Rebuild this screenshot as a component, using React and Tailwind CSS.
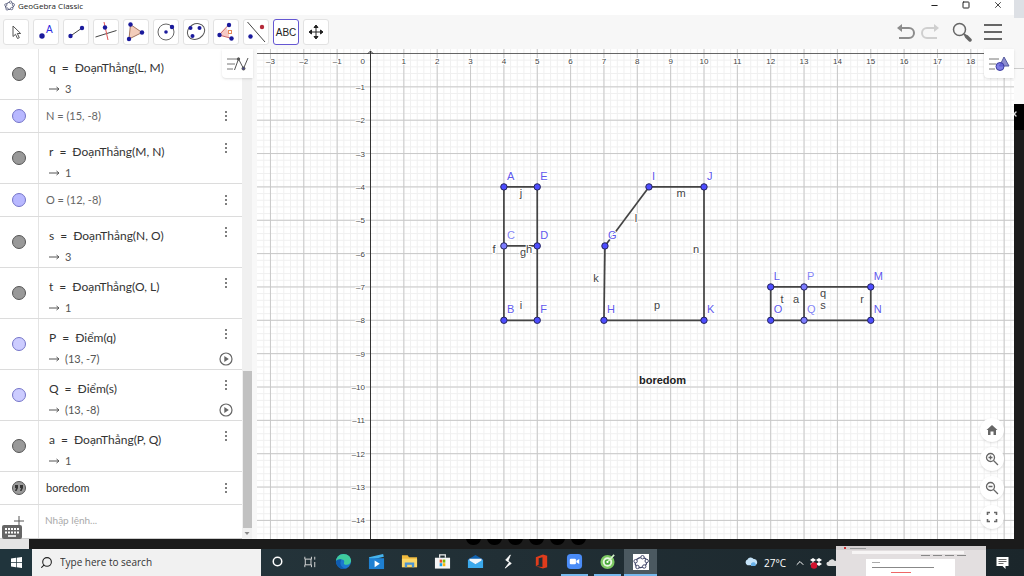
import { useState } from 'react';
import { Minus, Square, X, Search, ChevronUp } from 'lucide-react';

// ---------- ALGEBRA DATA ----------
const ROWS = [
  { name: 'q', def: 'ĐoạnThẳng(L, M)', out: '3', color: 'bg-[#999] border-[#555]' },
  { plain: 'N = (15, -8)', color: 'bg-[#b8b8ff] border-[#7474c8]' },
  { name: 'r', def: 'ĐoạnThẳng(M, N)', out: '1', color: 'bg-[#999] border-[#555]' },
  { plain: 'O = (12, -8)', color: 'bg-[#b8b8ff] border-[#7474c8]' },
  { name: 's', def: 'ĐoạnThẳng(N, O)', out: '3', color: 'bg-[#999] border-[#555]' },
  { name: 't', def: 'ĐoạnThẳng(O, L)', out: '1', color: 'bg-[#999] border-[#555]' },
  { name: 'P', def: 'Điểm(q)', out: '(13, -7)', play: true, color: 'bg-[#ccccff] border-[#7474c8]' },
  { name: 'Q', def: 'Điểm(s)', out: '(13, -8)', play: true, color: 'bg-[#ccccff] border-[#7474c8]' },
  { name: 'a', def: 'ĐoạnThẳng(P, Q)', out: '1', color: 'bg-[#999] border-[#555]' },
  { plain: 'boredom', text: true, color: 'bg-[#999] border-[#555]' },
];

// ---------- GRAPH DATA ----------
const UNIT = 33.35;
const OX = 113.5;
const OY = 4.5;
const px = (x) => OX + x * UNIT;
const py = (y) => OY - y * UNIT;

const POINTS = {
  A: [4, -4], E: [5, -4], C: [4, -5.77], D: [5, -5.77], B: [4, -8], F: [5, -8],
  G: [7.03, -5.77], I: [8.35, -4], J: [10, -4], H: [7, -8], K: [10, -8],
  L: [12, -7], P: [13, -7], M: [15, -7], O: [12, -8], Q: [13, -8], N: [15, -8],
};
const ON_PATH = ['C', 'P', 'Q'];

const SEGMENTS = ['AB', 'CD', 'EF', 'BF', 'AE', 'GH', 'GI', 'IJ', 'JK', 'HK', 'LM', 'MN', 'NO', 'OL', 'PQ'];

const SEGMENT_LABELS = [
  ['j', 264, 148], ['f', 237, 204], ['g', 266, 207], ['h', 272, 204], ['i', 264, 260],
  ['k', 339, 233], ['l', 379, 173], ['m', 424, 148], ['n', 439, 204], ['p', 400, 260],
  ['t', 525, 254], ['a', 539, 254], ['q', 566, 248], ['s', 566, 260], ['r', 605, 254],
];

const range = (from, to) => Array.from({ length: to - from + 1 }, (_, i) => from + i);

// ---------- TOOLBAR ICONS ----------
const Dot = ({ x, y, r = 2.2, fill = '#1a1a9c' }) => <circle cx={x} cy={y} r={r} fill={fill} />;

const TOOLS = [
  { id: 'Move', icon: <path d="M10 7v10.500l2.500-2.200 2 4.200 1.800-.8-2-4.200h3.400z" fill="#fff" stroke="#555" /> },
  { id: 'Point', icon: <><Dot x={9} y={17} r={2.7} /><text x="13" y="14" fontSize="10" fill="#2a2ae0">A</text></> },
  { id: 'Segment', icon: <><path d="M7.500 17L19 9" stroke="#444" /><Dot x={7.500} y={17} /><Dot x={19} y={9} /></> },
  { id: 'Perpendicular', icon: <><path d="M2.500 18l21-6.500" stroke="#444" /><path d="M11 3l4 18" stroke="#e05555" /><Dot x={12} y={8.500} /></> },
  { id: 'Polygon', icon: <><path d="M7.500 5.500L19 13.500 6 20z" fill="#f3cdbb" stroke="#a3765f" /><Dot x={7.500} y={5.500} /><Dot x={19} y={13.500} /><Dot x={6} y={20} /></> },
  { id: 'Circle', icon: <><circle cx="13" cy="13" r="8" fill="none" stroke="#666" /><Dot x={13} y={13} r={1.8} /><Dot x={19} y={8} /></> },
  { id: 'Ellipse', icon: <><ellipse cx="13" cy="12.500" rx="9" ry="7.500" transform="rotate(-30 13 12.500)" fill="none" stroke="#555" /><Dot x={7.500} y={9} r={2} /><Dot x={16.500} y={9} r={2} /><Dot x={9.500} y={17} r={2} /></> },
  { id: 'Angle', icon: <><path d="M6 16l7-7.500q3.500 5 3 10z" fill="#f6c9c4" /><path d="M15.500 6L6 16l13 3.500" fill="none" stroke="#c66" /><rect x="15.500" y="11.500" width="3" height="3" fill="none" stroke="#e58a5a" /><Dot x={16} y={6} /><Dot x={6.500} y={16} /><Dot x={18.500} y={19.500} /></> },
  { id: 'Reflect', icon: <><path d="M4.500 3L22 23" stroke="#444" /><Dot x={7.500} y={17.500} /><Dot x={19} y={8} fill="#b52a3a" /></> },
  { id: 'Text', icon: <text x="13" y="16.500" fontSize="10" textAnchor="middle" fill="#222">ABC</text> },
  { id: 'Move view', icon: <path d="M13 7v12M7 13h12M11 8.500L13 6l2 2.500zM11 17.500L13 20l2-2.500zM8.500 11L6 13l2.500 2zM17.500 11L20 13l-2.500 2z" fill="#222" stroke="#222" /> },
];

const GeoLogo = ({ className }) => (
  <svg viewBox="0 0 16 16" className={className} fill="#fff" stroke="#444a6c">
    <ellipse cx="8" cy="8.500" rx="6" ry="5" transform="rotate(-20 8 8.500)" fill="none" strokeWidth="1.300" />
    <circle cx="9.500" cy="3.200" r="1.700" />
    <circle cx="13.700" cy="7" r="1.700" />
    <circle cx="11.200" cy="12.500" r="1.700" />
    <circle cx="4.500" cy="13" r="1.700" />
    <circle cx="2.600" cy="7.200" r="1.700" />
  </svg>
);

const TitleBar = () => (
  <header className="flex h-[15px] shrink-0 items-start justify-between bg-white">
    <div className="flex h-3 items-start gap-[3px] pl-1">
      <GeoLogo className="h-[11px] w-[11px]" />
      <h1 className="font-['Open_Sans',sans-serif] text-[8px] leading-[11px] text-[#222]">GeoGebra Classic</h1>
    </div>
    <div className="flex h-[10px] items-center text-[#222]">
      <button aria-label="Minimize" className="flex w-8 justify-center"><Minus size={9} strokeWidth={3} /></button>
      <button aria-label="Maximize" className="flex w-8 justify-center"><Square size={8} strokeWidth={3} /></button>
      <button aria-label="Close" className="flex w-8 justify-center"><X size={10} strokeWidth={2} /></button>
    </div>
  </header>
);

const Toolbar = () => {
  const [tool, setTool] = useState('Text');
  return (
    <div className="flex h-[34px] shrink-0 items-center justify-between bg-[#f7f7f7]">
      <div className="flex gap-1 pl-[3px]">
        {TOOLS.map((t) => (
          <button
            key={t.id}
            aria-label={t.id}
            onClick={() => setTool(t.id)}
            className={`h-[26px] w-[26px] rounded-[3px] border bg-white ${tool === t.id ? 'border-[#6557d2]' : 'border-[#e2e2e2]'}`}
          >
            <svg viewBox="1 1 24 24" className="h-full w-full font-['Liberation_Sans',sans-serif]">{t.icon}</svg>
          </button>
        ))}
      </div>
      <div className="flex items-center gap-1 pr-3">
        <button aria-label="Undo">
          <svg viewBox="0 0 20 18" className="h-[18px] w-5"><path d="M3 5h10a5 5 0 010 10H3" fill="none" stroke="#8c8c8c" strokeWidth="2" /><path d="M1 5l5-4v8z" fill="#8c8c8c" /></svg>
        </button>
        <button aria-label="Redo">
          <svg viewBox="0 0 20 18" className="h-[18px] w-5"><path d="M17 5H7a5 5 0 000 10h10" fill="none" stroke="#cfcfcf" strokeWidth="2" /><path d="M19 5l-5-4v8z" fill="#cfcfcf" /></svg>
        </button>
        <button aria-label="Search" className="ml-2">
          <svg viewBox="0 0 20 20" className="h-5 w-5" fill="none" stroke="#666"><circle cx="7.500" cy="7.500" r="6" strokeWidth="1.500" /><path d="M12 12l2 2" strokeWidth="2" /><path d="M14.500 14.500l3.500 3.500" strokeWidth="3.500" strokeLinecap="round" /></svg>
        </button>
        <button aria-label="Menu" className="ml-2 flex w-[18px] flex-col gap-[5px]">
          <span className="h-[2px] w-full bg-[#666]" />
          <span className="h-[2px] w-full bg-[#666]" />
          <span className="h-[2px] w-full bg-[#666]" />
        </button>
      </div>
    </div>
  );
};

const MoreButton = () => (
  <button aria-label="More" className="flex h-[12px] w-3 flex-col items-center justify-between py-px">
    <span className="h-[2px] w-[2px] rounded-full bg-[#555]" />
    <span className="h-[2px] w-[2px] rounded-full bg-[#555]" />
    <span className="h-[2px] w-[2px] rounded-full bg-[#555]" />
  </button>
);

const AlgebraRow = ({ row }) => (
  <li className={`flex shrink-0 border-b border-[#dcdcdc] ${row.plain ? 'h-[33px]' : 'h-[51px]'}`}>
    <div className="flex w-[39px] shrink-0 items-center justify-center border-r border-[#e4e4e4] pr-px">
      <button aria-label="Show or hide" className={`flex h-[14px] w-[14px] items-center justify-center rounded-full border ${row.color}`}>
        {row.text && (
          <svg viewBox="0 0 10 8" className="h-[8px] w-[10px]" fill="#333"><path d="M1 1h3v3L2.500 7H1l1-3H1zM6 1h3v3L7.500 7H6l1-3H6z" /></svg>
        )}
      </button>
    </div>
    {row.plain ? (
      <div className="flex grow items-center justify-between pr-[10px] pb-px pl-[7px]">
        <span className={`text-[11px] leading-4 ${row.text ? 'text-[#333]' : 'text-[#666]'}`}>{row.plain}</span>
        <MoreButton />
      </div>
    ) : (
      <div className="flex grow justify-between pr-[10px] pl-[10px]">
        <div className="pt-[11px]">
          <div className="flex gap-[6px] text-[12px] leading-4 text-[#333]">
            <span>{row.name}</span>
            <span>=</span>
            <span>{row.def}</span>
          </div>
          <div className="flex items-center gap-[5px] pt-[5px] text-[11px] leading-4 text-[#555]">
            <svg viewBox="0 0 11 6" className="h-[6px] w-[11px]" fill="none" stroke="#555"><path d="M0 3h10M7.500 1L10 3 7.500 5" /></svg>
            <span>{row.out}</span>
          </div>
        </div>
        <div className="flex flex-col items-center gap-3 pt-[9px]">
          <MoreButton />
          {row.play && (
            <button aria-label="Play" className="-mx-px">
              <svg viewBox="0 0 14 14" className="h-[14px] w-[14px]"><circle cx="7" cy="7" r="6" fill="none" stroke="#666" strokeWidth="1.200" /><path d="M5.300 4l4.500 3-4.500 3z" fill="#666" /></svg>
            </button>
          )}
        </div>
      </div>
    )}
  </li>
);

const AlgebraView = () => (
  <aside className="relative flex w-[257px] shrink-0 bg-[#f8f8f8] font-[Lato,'Noto_Sans',sans-serif]">
    <div className="flex w-[242px] flex-col justify-end overflow-hidden bg-white">
      <ul className="flex flex-col">
        {ROWS.map((row, i) => <AlgebraRow key={i} row={row} />)}
      </ul>
      <div className="flex h-[34px] shrink-0 border-b border-[#ccc]">
        <div className="flex w-[39px] shrink-0 justify-center border-r border-[#e4e4e4] pt-[11px]">
          <svg viewBox="0 0 10 10" className="h-[10px] w-[10px]" stroke="#555"><path d="M5 0v10M0 5h10" /></svg>
        </div>
        <input aria-label="Nhập lệnh" placeholder="Nhập lệnh..." className="w-full min-w-0 pb-[3px] pl-[6px] text-[10px] outline-none placeholder:text-[#aaa]" />
      </div>
    </div>
    <div className="flex w-[10px] flex-col items-center bg-[#f0f0f0]">
      <div className="flex-[322]" />
      <div className="w-[9px] flex-[157] bg-[#c1c1c1]" />
      <svg viewBox="0 0 10 11" className="h-[11px] w-[10px]"><path d="M2.500 4h5L5 7z" fill="#888" /></svg>
    </div>
    <button aria-label="Algebra settings" className="absolute top-0 right-1 flex h-[29px] w-[31px] items-center justify-center rounded-bl bg-white shadow">
      <svg viewBox="0 0 22 16" className="h-4 w-[22px]" fill="none" stroke="#555"><path d="M0 3h10M0 8h8M0 13h6" stroke="#777" /><path d="M7.500 14L11.500 3l5 9.500L21 2" /><circle cx="11.500" cy="3" r="1.200" fill="#555" /><circle cx="16.500" cy="12.500" r="1.500" fill="#448" /></svg>
    </button>
    <button aria-label="Keyboard" className="absolute bottom-0 left-[2px]">
      <svg viewBox="0 0 20 14" className="h-[14px] w-5"><rect width="20" height="14" rx="2" fill="#666" /><path d="M3 4h14M3 7.500h14" stroke="#fff" strokeWidth="1.800" strokeDasharray="2 1" /><path d="M6 11h8" stroke="#fff" strokeWidth="1.600" /></svg>
    </button>
  </aside>
);

const GraphButton = ({ label, children }) => (
  <button aria-label={label} className="flex h-6 w-6 items-center justify-center rounded-full bg-white shadow">
    <svg viewBox="0 0 14 14" className="h-[14px] w-[14px]" fill="none" stroke="#666" strokeWidth="1.300">{children}</svg>
  </button>
);

const Graph = () => (
  <main className="relative min-w-0 grow bg-white">
    <svg className="absolute inset-0 h-full w-full font-['Liberation_Sans',sans-serif]">
      {/* Grid */}
      <g stroke="#f0f0f0">
        {range(-16, 200).map((n) => <line key={n} x1={px(n / 5)} x2={px(n / 5)} y1="0" y2="100%" />)}
        {range(0, 150).map((n) => <line key={n} x1="0" x2="100%" y1={py(-n / 5)} y2={py(-n / 5)} />)}
      </g>
      <g stroke="#c8c8c8">
        {range(-3, 40).map((n) => <line key={n} x1={px(n)} x2={px(n)} y1="0" y2="100%" />)}
        {range(1, 30).map((n) => <line key={n} x1="0" x2="100%" y1={py(-n)} y2={py(-n)} />)}
      </g>
      {/* Axes */}
      <g stroke="#333" fill="none">
        <line x1="0" x2="100%" y1={OY} y2={OY} stroke="#666" />
        <line x1={OX} x2={OX} y1="2" y2="100%" />
        <path d={`M${OX - 3} 5L${OX} 2l3 3`} />
      </g>
      <g fontSize="8" fill="#444" stroke="#fff" strokeWidth="2" paintOrder="stroke">
        {range(-3, 18).filter((n) => n !== 0).map((n) => (
          <text key={n} x={px(n)} y="15" textAnchor="middle">{n < 0 ? `–${-n}` : n}</text>
        ))}
        <text x="108" y="15" textAnchor="end">0</text>
        {range(1, 14).map((n) => <text key={n} x="108" y={py(-n) + 3} textAnchor="end">{`–${n}`}</text>)}
      </g>
      {/* Segments and points */}
      <g stroke="#444" strokeWidth="1.700">
        {SEGMENTS.map((s) => {
          const [p, q] = [POINTS[s[0]], POINTS[s[1]]];
          return <line key={s} x1={px(p[0])} y1={py(p[1])} x2={px(q[0])} y2={py(q[1])} />;
        })}
      </g>
      <g fontSize="11" textAnchor="middle" fill="#444" stroke="#fff" strokeWidth="2" paintOrder="stroke">
        {SEGMENT_LABELS.map(([t, x, y]) => <text key={t} x={x} y={y}>{t}</text>)}
      </g>
      {Object.entries(POINTS).map(([name, [x, y]]) => (
        <g key={name}>
          <text x={px(x) + 3} y={py(y) - 7} fontSize="11" fill={ON_PATH.includes(name) ? '#8484f5' : '#6058ec'} stroke="#fff" strokeWidth="2" paintOrder="stroke">{name}</text>
          <circle cx={px(x)} cy={py(y)} r="3.200" fill={ON_PATH.includes(name) ? '#7d7dff' : '#4d4dff'} stroke="#26265c" />
        </g>
      ))}
      <text x="382" y="335" fontSize="11" fontWeight="bold" fill="#222">boredom</text>
    </svg>
    <button aria-label="Graph settings" className="absolute top-0 right-0 flex h-[29px] w-[30px] items-center justify-center rounded-bl bg-white shadow">
      <svg viewBox="0 0 22 16" className="h-4 w-[22px]"><path d="M1 3h10M1 8h7M1 13h6" stroke="#777" /><path d="M16 1l5 9h-9.500z" fill="#8c8ccf" stroke="#555a9c" /><circle cx="12" cy="10.500" r="4" fill="#5b5bdc" fillOpacity=".8" stroke="#3d3da0" /></svg>
    </button>
    <div className="absolute right-[10px] bottom-[10px] flex flex-col gap-[5px]">
      <GraphButton label="Home"><path d="M7 2l5.500 5H11v5H8.500V8.500h-3V12H3V7H1.500z" fill="#666" stroke="none" /></GraphButton>
      <GraphButton label="Zoom in"><circle cx="5.500" cy="5.500" r="4" /><path d="M8.500 8.500l4.500 4.500M3.500 5.500h4M5.500 3.500v4" /></GraphButton>
      <GraphButton label="Zoom out"><circle cx="5.500" cy="5.500" r="4" /><path d="M8.500 8.500l4.500 4.500M3.500 5.500h4" /></GraphButton>
      <GraphButton label="Fullscreen"><path d="M2.500 5V2.500H5M9 2.500h2.500V5M11.500 9v2.500H9M5 11.500H2.500V9" strokeWidth="1.600" /></GraphButton>
    </div>
  </main>
);

// ---------- TASKBAR ----------
const APPS = [
  { id: 'Cortana', icon: <circle cx="9" cy="9" r="4.500" fill="none" stroke="#fff" strokeWidth="1.600" /> },
  { id: 'Task View', icon: <path d="M3 4v2.500h7V4M3 15v-2.500h7V15M3.500 6.500v6M9.500 6.500v6M13.500 4v3M13.500 9.500V15" fill="none" stroke="#ddd" /> },
  { id: 'Edge', icon: <><circle cx="9" cy="9" r="8" fill="#1b78d0" /><path d="M1 8.500C1.500 4 5 1 9 1c5 0 8 3.500 8 7 0 3-2.500 4.500-5 4.500-2 0-3-.8-2.500-2 .8-1.500 0-3.500-2.500-3.500-3 0-5 1-6 1.500z" fill="#3fcb9d" /><path d="M6 9c-1 4 2 7.500 6 7.300A8 8 0 011 9c1-2.500 4-3 6-2-.5.500-.9 1.200-1 2z" fill="#0f5cb0" /></> },
  { id: 'Movies', icon: <><path d="M1 4.500l15-3.500.8 3L2 7.500z" fill="#46b4ee" /><rect x="1" y="5.500" width="16" height="11.500" fill="#1e80d2" /><path d="M7 8l5.500 3.500L7 15z" fill="#fff" /></> },
  { id: 'File Explorer', icon: <><path d="M1 2.500h6l1.500 2H17V15H1z" fill="#f0b93c" /><path d="M1 6h16v9H1z" fill="#fbd768" /><path d="M4 15v-5h10v5h-2.500v-2.500h-5V15z" fill="#4b93d3" /></> },
  { id: 'Store', icon: <><path d="M6 5V2h6v3" fill="none" stroke="#eee" strokeWidth="1.300" /><path d="M1 5h16v11.500H1z" fill="#f5f5f5" /><path d="M6 7h2.700v3.200H6z" fill="#e5522c" /><path d="M9.300 7H12v3.200H9.300z" fill="#7fba00" /><path d="M6 10.800h2.700V14H6z" fill="#19a0e8" /><path d="M9.300 10.800H12V14H9.300z" fill="#fbb80a" /></> },
  { id: 'Mail', icon: <><path d="M1 7l8-5 8 5v9H1z" fill="#0f62b0" /><path d="M1 7l8 5 8-5v9H1z" fill="#3aa9ec" /><path d="M2.500 6h13v2L9 12 2.500 8z" fill="#eef6fc" /></> },
  { id: 'Scripts', icon: <path d="M11 2L6 7.500l4 2.500-4.500 6L12 11 8.500 8.500z" fill="#fff" stroke="#fff" strokeWidth=".8" /> },
  { id: 'Office', icon: <path d="M3 4.500L10.500 1.500 15 3v12l-4.500 1.500L3 14l7 .8V4.500L6 5.500v7L3 14z" fill="#e03c1c" /> },
  { id: 'Zoom', open: true, icon: <><rect x="1" y="1" width="16" height="16" rx="4" fill="#4a8cf7" /><rect x="4" y="6" width="6.500" height="6" rx="1.200" fill="#fff" /><path d="M11 8.200L14 6.300v5.400l-3-1.900z" fill="#fff" /></> },
  { id: 'Coc Coc', open: true, icon: <><circle cx="9" cy="9.500" r="7.500" fill="#7cc862" /><circle cx="9" cy="9.500" r="5" fill="#e9f8e3" /><circle cx="9" cy="9.500" r="3" fill="#48a83b" /><circle cx="9" cy="9.500" r="1.200" fill="#fff" /><path d="M10 8.500L16 2" stroke="#d5f3c9" strokeWidth="1.800" /></> },
];

const Taskbar = () => (
  <footer className="relative flex h-[27px] shrink-0 items-stretch bg-gradient-to-r from-[#27383f] to-[#1b262b] font-['Open_Sans',sans-serif]">
    <button aria-label="Start" className="flex w-8 shrink-0 items-center justify-center bg-[#20343c]">
      <svg viewBox="0 0 11 11" className="h-[11px] w-[11px]" fill="#fff"><path d="M0 1.500L5 .8V5H0zM5.700.7L11 0v5H5.700zM0 5.700h5v4.500l-5-.7zM5.700 5.700H11V11l-5.300-.8z" /></svg>
    </button>
    <label className="flex w-[229px] shrink-0 items-center gap-[7px] bg-[#f1f1f1] pl-2">
      <Search size={13} strokeWidth={2} className="shrink-0 -scale-x-100 text-[#222]" />
      <input aria-label="Search" placeholder="Type here to search" className="w-full min-w-0 bg-transparent text-[10px] outline-none placeholder:text-[#333]" />
    </label>
    <nav className="flex">
      {APPS.map((app) => (
        <button key={app.id} aria-label={app.id} className={`mx-[3px] flex w-[27px] items-center justify-center border-b-2 ${app.open ? 'border-[#76b9ed]' : 'border-transparent'}`}>
          <svg viewBox="0 0 18 18" className="h-[17px] w-[17px]">{app.icon}</svg>
        </button>
      ))}
      <button aria-label="GeoGebra" className="flex w-[33px] items-center justify-center border-b-2 border-[#76b9ed] bg-[#4b5960]">
        <GeoLogo className="h-4 w-4 bg-white" />
      </button>
    </nav>
    <div className="ml-auto flex items-center pr-[15px] text-white">
      <svg viewBox="0 0 16 14" className="h-[13px] w-[14px]"><path d="M4 10a3.500 3.500 0 010-6.500A4 4 0 0111 3a3.500 3.500 0 011 7z" fill="#c5e3f8" /><path d="M8 8c3-3 7 0 5 3H8z" fill="#69b1e8" /></svg>
      <span className="ml-[6px] w-[22px] text-[10px] leading-4 whitespace-nowrap">27°C</span>
      <ChevronUp size={12} strokeWidth={2} className="ml-[8px]" />
      <svg viewBox="0 0 12 12" className="ml-1 h-[12px] w-3"><path d="M3 1l3 2-3 2-3-2zM9 1l3 2-3 2-3-2zM3 5l3 2-3 2-3-2zM9 5l3 2-3 2-3-2z" fill="#fff" /><circle cx="4" cy="8.500" r="3.200" fill="#d3122e" /></svg>
      <svg viewBox="0 0 14 10" className="ml-1 h-[9px] w-3"><path d="M3 9a2.500 2.500 0 010-5 4 4 0 017-1 3 3 0 011 6z" fill="#ddd" /></svg>
      <div className="w-[158px]" />
      <button aria-label="Notifications">
        <svg viewBox="0 0 12 12" className="h-3 w-[13px]"><path d="M0 0h12v9H9v3L6 9H0z" fill="#fff" /><path d="M2 2.500h8M2 4.500h8M2 6.500h5" stroke="#444" strokeWidth=".8" /></svg>
      </button>
    </div>
    {/* Window thumbnail */}
    <div className="absolute right-[38px] bottom-0 flex h-[30px] w-[150px] flex-col bg-[#e3dfe0]">
      <div className="flex h-[4px] items-center gap-1 bg-[#d3cfd0] px-2"><span className="h-[2px] w-[2px] bg-[#c33]" /><span className="h-px w-4 bg-[#999]" /></div>
      <div className="mt-px ml-4 h-[3px] w-[112px] bg-[#f7f5f5]" />
      <div className="mt-px flex justify-end gap-[3px] pr-[20px]">
        <span className="h-px w-[9px] bg-[#888]" /><span className="h-px w-[9px] bg-[#888]" /><span className="h-px w-[9px] bg-[#888]" /><span className="h-px w-[9px] bg-[#888]" />
      </div>
      <div className="mt-[3px] ml-[30px] flex w-[89px] grow flex-col gap-[4px] bg-white pt-[3px] pl-[6px]">
        <span className="h-px w-[8px] bg-[#aaa]" />
        <span className="h-px w-[62px] bg-[#888]" />
        <span className="ml-[19px] h-px w-5 bg-[#e66]" />
      </div>
    </div>
  </footer>
);

export default function App() {
  return (
    <div className="flex h-screen flex-col overflow-hidden bg-[#1b1b1b]">
      <div className="flex min-h-0 grow">
        <div className="flex min-w-0 grow flex-col bg-white">
          <TitleBar />
          <Toolbar />
          <div className="flex min-h-0 grow">
            <AlgebraView />
            <Graph />
          </div>
        </div>
        {/* Window behind */}
        <div className="flex w-[10px] shrink-0 flex-col">
          <div className="h-[18px] bg-[#dde0e5]" />
          <div className="h-[51px] border-b border-[#ccc] bg-[#f7f7f7]" />
          <div className="h-[35px] bg-[#fafafa]" />
          <div className="h-[26px] bg-black pt-[6px]"><X size={8} strokeWidth={4} className="-ml-1 text-[#ddd]" /></div>
        </div>
      </div>
      <div className="flex h-[10px] shrink-0">
        <div className="w-[29px] bg-[#e4e4e4]" />
        <div className="flex grow gap-[6px] overflow-hidden pl-[437px]">
          {range(1, 6).map((n) => <span key={n} className="-mt-2 h-[14px] w-[15px] rounded-full bg-black" />)}
        </div>
      </div>
      <Taskbar />
    </div>
  );
}
